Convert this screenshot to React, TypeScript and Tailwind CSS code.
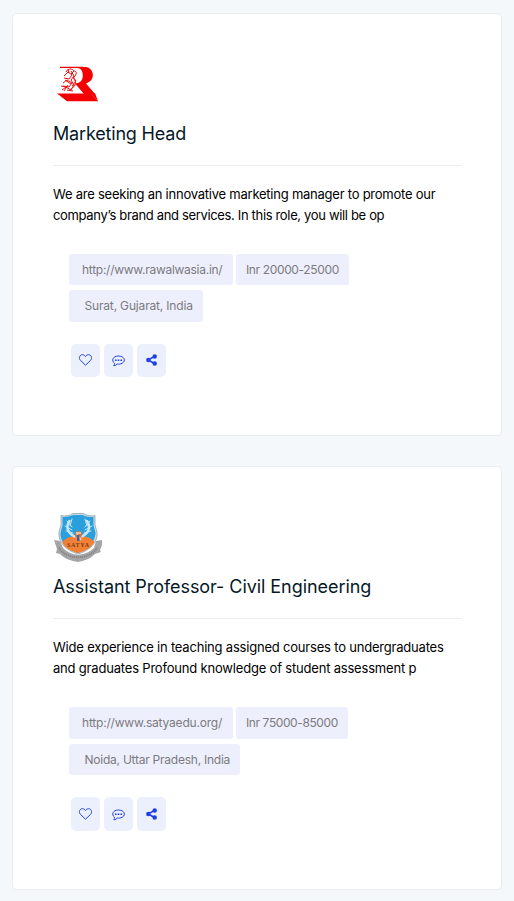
import type { ReactNode } from "react";

type Tag = { text: string; className: string };
type Job = {
  title: string;
  titleClass: string;
  logo: ReactNode;
  lines: { text: string; className: string }[];
  rows: Tag[][];
};

function RawalLogo() {
  return (
    <svg viewBox="0 0 50 50" className="block size-[50px]" fill="none">
      <path
        fill="#f50000"
        d="M7 7.700H30C36.500 7.700 39.800 11 39.800 16C39.800 20 37.500 23 33 24.500L42 35H31L22.700 25.200V24.200C28 24 29.800 20.500 29.800 16.500C29.800 12 28 8.900 24 8.900H7Z"
      />
      <path fill="#f50000" d="M4 34.500H37.500L45 42.300H14Z" />
      <g stroke="#ee1010" strokeWidth="1">
        <path d="M13 13c1-3 5-4 7-2s4 1 3 4-3 3-2 5 2 3 1 6-4 2-5 6" />
        <path d="M11 17l4-4 4 3-3 4-5-1M10 24l4-3 5 3-3 4-6-1M9 31l4-3 5 3M18 12l3 5-3 4 3 5-3 5" />
        <path d="M15 10l1 4M21 12l-3 3M12 21l6 4M15 26l-4 6M20 18l3 4-4 5M8 27l5 1M14 31l6 1" />
      </g>
      <path fill="#f50000" d="M37 34.300H42L45 42.300Z" />
    </svg>
  );
}

function SatyaLogo() {
  return (
    <svg viewBox="0 0 50 50" className="block size-[50px]">
      <path fill="#a5a5a7" d="M1 28l6 1 3 7c5 5 10 6 15 7 5-1 11-2 16-7l2-7 6-1v5l-2 5 1 2-6 2c-5 5-11 7-17 8-7-1-13-3-18-8l-4-1 1-4Z" />
      <path fill="#c9dbe4" stroke="#8fa3ae" strokeWidth="0.8" d="M8 3.500c5 1 9 0 12-2h10c4 2 8 3 12 2v9.500l2 7c1 10-6 18-19 22C12 38 5 30 6 20l2-7Z" />
      <path fill="#2a9fdd" d="M9.500 5c5 0 8-1 11-2h9c4 2 7 2 11 2v8.500l2 7c0 8-6 16.500-17.500 20.500C13.500 37 7 29 7.500 21l2-7.500Z" />
      <path fill="#f28135" d="M9 30l5-4 6-2h10l7 2 4.500 4c-3 5-8.500 9-16.500 11-8-2-13-5-16-11Z" />
      <g fill="none" stroke="#c5e7f7" strokeLinecap="round">
        <path strokeWidth="2.500" d="M16.500 9c-4 6-2 12 5 15.500M34 9c4 6 2 12-5 15.500" />
        <path strokeWidth="1" d="M19 7l-2 7M14 9l5 6M12 14l7 4M13 19l7 2M32 7l2 7M37 9l-5 6M39 14l-7 4M38 19l-7 2" />
      </g>
      <circle cx="25.500" cy="22.500" r="3.500" fill="#d07a4a" />
      <path stroke="#f7d5ab" strokeWidth="1.500" d="M23 21h5M24 22l4 6" />
      <path fill="#4561a5" d="M24 23h2.500v6H24z" />
      <text x="25" y="34.500" textAnchor="middle" fill="#7b3a20" fontFamily="Liberation Serif, serif" fontWeight="700" fontSize="6" textLength="22">SATYA</text>
      <path d="M6 35.500c7 13 31 13 38 0" fill="none" stroke="#808085" strokeWidth="1.800" strokeDasharray="1.200 0.800" />
    </svg>
  );
}

const jobs: Job[] = [
  {
    title: "Marketing Head",
    titleClass: "tracking-[-0.18px]",
    logo: <RawalLogo />,
    lines: [
      { text: "We are seeking an innovative marketing manager to promote our", className: "tracking-[-0.235px]" },
      { text: "company’s brand and services. In this role, you will be op", className: "tracking-[-0.34px]" },
    ],
    rows: [
      [
        { text: "http://www.rawalwasia.in/", className: "w-[164px] pl-[13px] tracking-[-0.27px]" },
        { text: "Inr 20000-25000", className: "w-[113px] pl-[10px] tracking-[-0.36px]" },
      ],
      [{ text: "Surat, Gujarat, India", className: "w-[134px] pl-[15.5px] tracking-[-0.17px]" }],
    ],
  },
  {
    title: "Assistant Professor- Civil Engineering",
    titleClass: "tracking-[-0.06px]",
    logo: <SatyaLogo />,
    lines: [
      { text: "Wide experience in teaching assigned courses to undergraduates", className: "tracking-[-0.2px]" },
      { text: "and graduates Profound knowledge of student assessment p", className: "tracking-[-0.19px]" },
    ],
    rows: [
      [
        { text: "http://www.satyaedu.org/", className: "w-[164px] pl-[13px] tracking-[-0.2px]" },
        { text: "Inr 75000-85000", className: "w-[112px] pl-[10px] tracking-[-0.4px]" },
      ],
      [{ text: "Noida, Uttar Pradesh, India", className: "w-[171px] pl-[15.5px] tracking-[-0.24px]" }],
    ],
  },
];

function HeartIcon() {
  return (
    <svg viewBox="0 0 13 12" className="h-3 w-[13px]" fill="none" stroke="currentColor">
      <path d="M6.500 11.200 1.400 6.300C-.8 3.800 1 .7 3.400.7c1.500 0 2.500.9 3.100 1.900C7.100 1.600 8.100.7 9.600.7c2.400 0 4.200 3.100 2 5.600Z" />
    </svg>
  );
}

function CommentIcon() {
  return (
    <svg viewBox="0 0 13 12" className="mt-0.5 h-3 w-[13px]" fill="none" stroke="currentColor">
      <path d="M2.500 8.200C-.8 5.800.6 1 6.500 1s7.700 5 3.600 7.300c-1.600.9-3.300 1-4.800.7-.8.9-2 1.700-3.500 1.800.6-.8.900-1.700.7-2.600Z" />
      <path fill="currentColor" stroke="none" d="M3 4.400h1.600V6H3zM5.700 4.400h1.600V6H5.700zM8.400 4.400H10V6H8.400z" />
    </svg>
  );
}

function ShareIcon() {
  return (
    <svg viewBox="0 0 11 12" className="h-3 w-[11px]" fill="currentColor">
      <path d="M2.200 6 8.500 2.400M2.200 6l6.300 3.500" stroke="currentColor" strokeWidth="1.500" />
      <circle cx="2.300" cy="6" r="2.200" />
      <circle cx="8.700" cy="2.500" r="2.200" />
      <circle cx="8.700" cy="9.500" r="2.200" />
    </svg>
  );
}

function JobCard({ job }: { job: Job }) {
  return (
    <article className="h-[423.4px] rounded-[5px] border border-[#ebeef0] bg-white px-10 pt-[45px]">
      {job.logo}
      <h2 className="mt-[10px] h-[30px] text-[18px] leading-[30px] text-[#061828]">
        <span className={job.titleClass}>{job.title}</span>
      </h2>
      <hr className="mt-[16px] border-[#ebeced]" />
      <div className="mt-[18px] text-[13px] leading-[21px] text-black">
        {job.lines.map((l) => (
          <p key={l.text} className="whitespace-nowrap">
            <span className={l.className}>{l.text}</span>
          </p>
        ))}
      </div>
      <div className="mt-[27.7px] flex flex-col gap-[5px] pl-4 text-[12px] text-[#7b7b7e]">
        {job.rows.map((row, i) => (
          <div key={i} className="flex gap-[3px]">
            {row.map((t) => (
              <span
                key={t.text}
                className={"h-[31.5px] rounded-[3px] bg-[#eeeffd] leading-[31px] whitespace-nowrap " + t.className}
              >
                {t.text}
              </span>
            ))}
          </div>
        ))}
      </div>
      <div className="mt-[22px] flex gap-1 pl-[18px] text-[#1f40e6]">
        {[<HeartIcon />, <CommentIcon />, <ShareIcon />].map((icon, i) => (
          <button key={i} className="flex h-[33.5px] w-[29px] items-center justify-center rounded-[5px] bg-[#ecf0fd]">
            {icon}
          </button>
        ))}
      </div>
    </article>
  );
}

export default function App() {
  return (
    <main className="flex h-[901px] flex-col gap-[30.05px] bg-[#f4f8fb] px-3 pt-[13px] font-[Inter,sans-serif]">
      {jobs.map((job) => (
        <JobCard key={job.title} job={job} />
      ))}
    </main>
  );
}
